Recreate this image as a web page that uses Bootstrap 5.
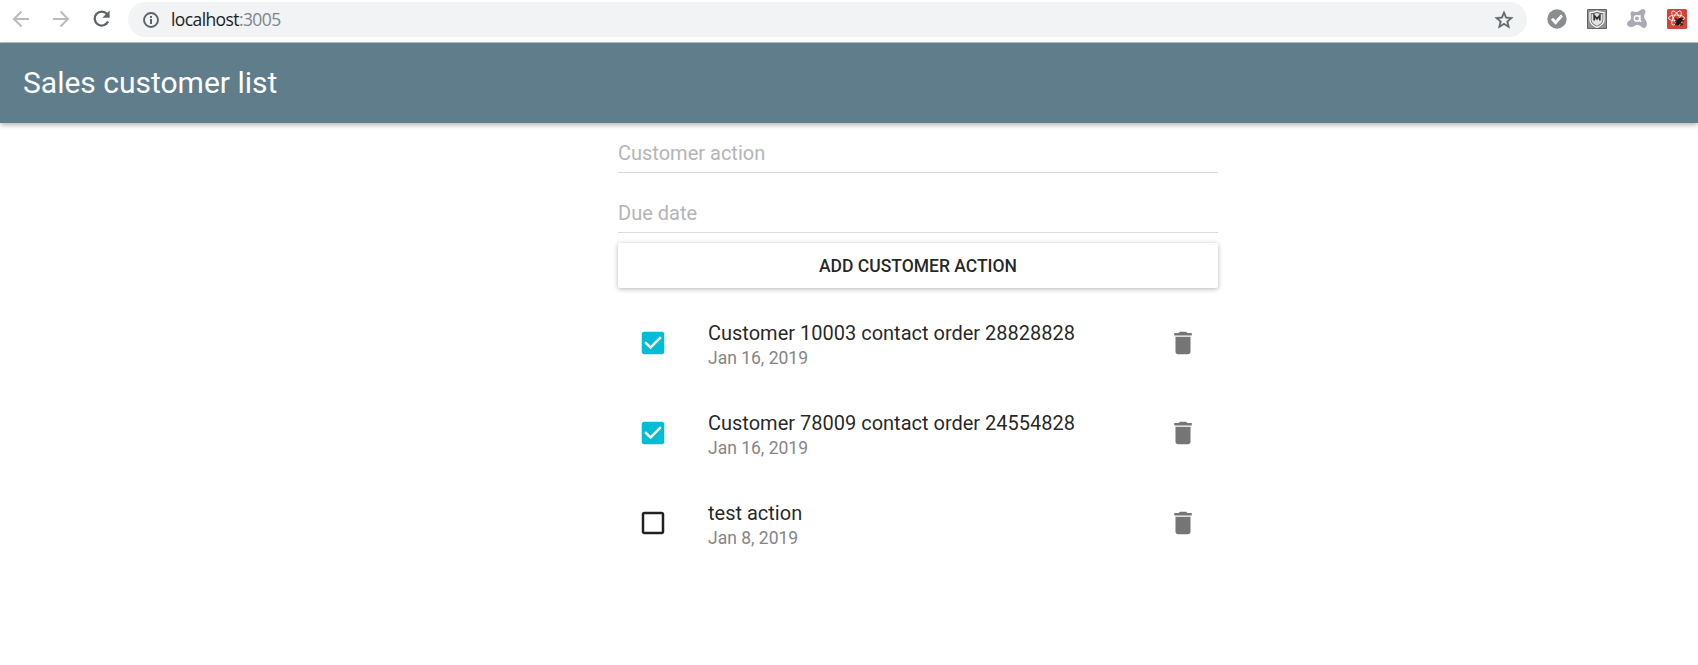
<!DOCTYPE html>
<html lang="en">
<head>
<meta charset="utf-8">
<title>Sales customer list</title>
<link href="https://cdn.jsdelivr.net/npm/bootstrap@5.3.0/dist/css/bootstrap.min.css" rel="stylesheet">
<style>
  body { font-family: Roboto, "Liberation Sans", sans-serif; background: #fff; color: rgba(0,0,0,.87); overflow: hidden; }
  svg { display: block; flex: none; }
  .browser-bar { height: 43px; padding: 0 11px 4px 10px; border-bottom: 1px solid #b9c3c8; }
  .nav-icons { width: 118px; gap: 16px; }
  .omnibox { height: 35px; background: #f1f3f4; border-radius: 18px; padding: 0 12px 0 11px; margin-top: 1px; }
  .address { font: 17.5px/24px "Open Sans", "Noto Sans", sans-serif; letter-spacing: -.6px; color: #202124; margin: -2px 0 0 8px; }
  .address span { color: #80868b; }
  .extensions { gap: 20px; margin-left: 20px; }
  .app-bar { height: 80px; padding: 0 23px; background: #607d8b; box-shadow: 0 2px 5px rgba(0,0,0,.3); }
  .app-title { font-size: 30px; line-height: 40px; font-weight: 400; color: #fff; }
  .page-main { padding-left: 138px; }
  .page-col { width: 600px; }
  .field { height: 60px; padding: 20px 0 0; border: 0; border-bottom: 1px solid #dcdcdc; border-radius: 0; font-size: 20px; line-height: 30px; background: none; }
  .field:first-child { height: 50px; padding-top: 10px; }
  .field::placeholder { color: #b5b5b5; opacity: 1; }
  .btn-add { height: 45px; margin-top: 10px; padding: 1px 0 0; border: 0; border-radius: 2px; background: #fff; box-shadow: 0 1px 5px rgba(0,0,0,.3); font-size: 17.5px; font-weight: 500; line-height: 45px; color: rgba(0,0,0,.87); }
  .actions { margin-top: 10px; }
  .action-row { height: 90px; padding: 0 20px; background: none; color: rgba(0,0,0,.87); }
  .action-text { margin-left: 40px; padding-top: 6px; }
  .action-name { font-size: 20px; line-height: 24px; }
  .action-date { font-size: 17.5px; line-height: 26px; color: #858585; }
</style>
</head>
<body>
<header class="browser-bar d-flex align-items-center">
  <div class="nav-icons d-flex">
    <svg width="24" height="24" viewBox="0 0 24 24" fill="none" stroke="#b9bbbe" stroke-width="2"><path d="M19 12H4M11.5 4.5 4 12l7.500 7.500"/></svg>
    <svg width="24" height="24" viewBox="0 0 24 24" fill="none" stroke="#b9bbbe" stroke-width="2"><path d="M3 12h15M10.500 4.500 18 12l-7.500 7.500"/></svg>
    <svg width="24" height="24" viewBox="0 0 24 24" fill="none" stroke="#5f6368" stroke-width="2.300"><path d="M17 7A7 7 0 1 0 18 14.500"/><path d="M19.600 3.500v7.300h-7.300z" fill="#5f6368" stroke="none"/></svg>
  </div>
  <div class="omnibox d-flex align-items-center flex-grow-1">
    <svg width="24" height="24" viewBox="0 0 24 24" fill="none" stroke="#5f6368"><circle cx="12" cy="12" r="7" stroke-width="1.900"/><path d="M12 11v5M12 8v2" stroke-width="2"/></svg>
    <div class="address">localhost<span>:3005</span></div>
    <svg class="ms-auto" width="22" height="22" viewBox="0 0 24 24" fill="#5f6368" stroke="#5f6368" stroke-width=".4"><path d="M22 9.240l-7.190-.62L12 2 9.190 8.630 2 9.240l5.460 4.730L5.820 21 12 17.270 18.180 21l-1.630-7.030L22 9.240zM12 15.400l-3.760 2.270 1-4.280-3.320-2.880 4.380-.38L12 6.100l1.710 4.040 4.380.38-3.320 2.880 1 4.280L12 15.400z"/></svg>
  </div>
  <div class="extensions d-flex">
    <svg width="20" height="20" viewBox="0 0 20 20"><circle cx="10" cy="10" r="9.700" fill="#8b8d91"/><path d="M5 9.800l3.600 3.700L15 6.500" fill="none" stroke="#fff" stroke-width="3"/></svg>
    <svg width="20" height="20" viewBox="0 0 20 20"><rect width="20" height="20" rx="1" fill="#636363"/><rect x="1" y="1" width="18" height="18" fill="#929292"/><path d="M10 2c2 1 4.500 1.500 7 1.600V11c0 3.600-3.500 6-7 7.400C6.500 17 3 14.600 3 11V3.600C5.500 3.500 8 3 10 2z" fill="#777" stroke="#fff" stroke-width="1.200"/><path d="M10 4c1.500.8 3.500 1.200 5.400 1.300V11c0 2.700-2.700 4.500-5.400 5.700C7.300 15.500 4.600 13.700 4.600 11V5.300C6.500 5.200 8.500 4.800 10 4z" fill="#e2e2e2"/><path d="M7.200 11.500V6.500L10 9.800l2.800-3.300v5" fill="none" stroke="#333" stroke-width="1.800"/></svg>
    <svg width="20" height="20" viewBox="0 0 20 20"><path d="M6 2.500c2.500.8 4.500.7 6.500-.8C13.500.3 18-.8 18.400 2c.4 2.300-1.400 3-1.300 5.500.1 2.500 2.900 4.600 2.900 7.500 0 3-2.500 5-4.500 3.500-1.700-1.300-3.200-3-6-2.500-2 .4-2.700 2.200-5.500 2.100C1 18-.5 15.500.3 13.600 1.200 11.600 4 11.600 4.100 9c0-1.500-1-4-.3-5.500.4-.9 1.200-1.400 2.200-1z" fill="#aaa9b5"/><circle cx="10" cy="9.400" r="2.700" fill="none" stroke="#fff" stroke-width="1.500"/><path d="M12.900 6v5.500c0 1 .6 1.100 1.300.7" fill="none" stroke="#fff" stroke-width="1.400"/></svg>
    <svg width="20" height="20" viewBox="0 0 20 20"><rect width="20" height="20" rx="1.500" fill="#d0443a"/><g fill="none" stroke="#fff" stroke-width=".8"><ellipse cx="9.500" cy="9" rx="8" ry="3"/><ellipse cx="9.500" cy="9" rx="8" ry="3" transform="rotate(60 9.500 9)"/><ellipse cx="9.500" cy="9" rx="8" ry="3" transform="rotate(120 9.500 9)"/></g><ellipse cx="12" cy="12.500" rx="2.300" ry="4.300" transform="rotate(32 12 12.500)" fill="#261513"/><path d="M8 9.500l3 2-3 1M16 9l-2 2.500 3 .5M8 15.500l2-1.500M14 17v-2.500l2 1" fill="none" stroke="#261513" stroke-width="1.200"/></svg>
  </div>
</header>

<nav class="app-bar d-flex align-items-center">
  <h1 class="app-title m-0">Sales customer list</h1>
</nav>

<main class="page-main d-flex justify-content-center">
  <div class="page-col">
    <form class="d-flex flex-column">
      <input class="field form-control shadow-none" type="text" placeholder="Customer action">
      <input class="field form-control shadow-none" type="text" placeholder="Due date">
      <button class="btn btn-add w-100 text-uppercase" type="button">Add customer action</button>
    </form>
    <ul class="actions list-group list-group-flush">
      <li class="action-row list-group-item border-0 d-flex align-items-center">
        <svg width="30" height="30" viewBox="0 0 24 24" fill="#00bcd4"><path d="M19 3H5c-1.110 0-2 .9-2 2v14c0 1.100.89 2 2 2h14c1.110 0 2-.9 2-2V5c0-1.100-.89-2-2-2zm-9 14l-5-5 1.410-1.410L10 14.170l7.590-7.590L19 8l-9 9z"/></svg>
        <div class="action-text"><div class="action-name">Customer 10003 contact order 28828828</div><div class="action-date">Jan 16, 2019</div></div>
        <svg class="ms-auto" width="30" height="30" viewBox="0 0 24 24" fill="#757575"><path d="M6 19c0 1.100.9 2 2 2h8c1.100 0 2-.9 2-2V7H6v12zM19 4h-3.500l-1-1h-5l-1 1H5v2h14V4z"/></svg>
      </li>
      <li class="action-row list-group-item border-0 d-flex align-items-center">
        <svg width="30" height="30" viewBox="0 0 24 24" fill="#00bcd4"><path d="M19 3H5c-1.110 0-2 .9-2 2v14c0 1.100.89 2 2 2h14c1.110 0 2-.9 2-2V5c0-1.100-.89-2-2-2zm-9 14l-5-5 1.410-1.410L10 14.170l7.590-7.590L19 8l-9 9z"/></svg>
        <div class="action-text"><div class="action-name">Customer 78009 contact order 24554828</div><div class="action-date">Jan 16, 2019</div></div>
        <svg class="ms-auto" width="30" height="30" viewBox="0 0 24 24" fill="#757575"><path d="M6 19c0 1.100.9 2 2 2h8c1.100 0 2-.9 2-2V7H6v12zM19 4h-3.500l-1-1h-5l-1 1H5v2h14V4z"/></svg>
      </li>
      <li class="action-row list-group-item border-0 d-flex align-items-center">
        <svg width="30" height="30" viewBox="0 0 24 24" fill="#212121"><path d="M19 5v14H5V5h14m0-2H5c-1.100 0-2 .9-2 2v14c0 1.100.9 2 2 2h14c1.100 0 2-.9 2-2V5c0-1.100-.9-2-2-2z"/></svg>
        <div class="action-text"><div class="action-name">test action</div><div class="action-date">Jan 8, 2019</div></div>
        <svg class="ms-auto" width="30" height="30" viewBox="0 0 24 24" fill="#757575"><path d="M6 19c0 1.100.9 2 2 2h8c1.100 0 2-.9 2-2V7H6v12zM19 4h-3.500l-1-1h-5l-1 1H5v2h14V4z"/></svg>
      </li>
    </ul>
  </div>
</main>
<script src="https://cdn.jsdelivr.net/npm/bootstrap@5.3.0/dist/js/bootstrap.bundle.min.js"></script>
</body>
</html>
